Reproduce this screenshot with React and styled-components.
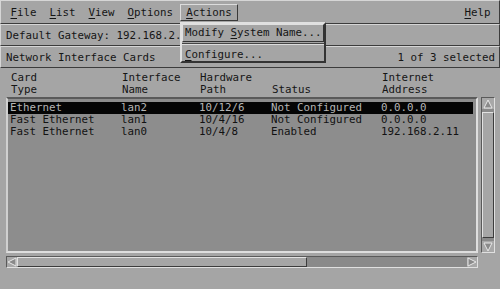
import styled, { createGlobalStyle } from "styled-components"

const GlobalStyle = createGlobalStyle`
  html, body {
    margin: 0;
    padding: 0;
    background: #a5a5a5;
  }
  body {
    font-family: "DejaVu Sans Mono", "Liberation Mono", monospace;
    font-size: 10.8px;
    color: #151515;
  }
`

const Window = styled.div`
    position: relative;
    width: 500px;
    height: 289px;
    overflow: hidden;
    background: #a5a5a5;
    display: flex;
    flex-direction: column;
    white-space: nowrap;
`

const MenuBar = styled.div`
    height: 24px;
    box-sizing: border-box;
    display: flex;
    align-items: center;
    padding: 0 2px 0 3px;
    border-top: 1px solid #d6d6d6;
    border-left: 1px solid #d6d6d6;
    border-right: 1px solid #3c3c3c;
    border-bottom: 1px solid #3c3c3c;
`

const MenuItem = styled.div`
    height: 17px;
    box-sizing: border-box;
    line-height: 15px;
    padding: 0 5.5px;
    border: 1px solid transparent;
    margin-left: ${p => (p.$right ? "auto" : "0")};
    ${p => p.$active && `
        border-top-color: #dcdcdc;
        border-left-color: #dcdcdc;
        border-right-color: #3a3a3a;
        border-bottom-color: #3a3a3a;
    `}
`

const Key = styled.span`
    text-decoration: underline;
    text-underline-offset: 2px;
`

const Strip = styled.div`
    height: 22px;
    box-sizing: border-box;
    display: flex;
    align-items: center;
    justify-content: space-between;
    padding: 0 4px 0 5px;
    border-top: 1px solid #d6d6d6;
    border-left: 1px solid #d6d6d6;
    border-right: 1px solid #3c3c3c;
    border-bottom: 1px solid #3c3c3c;
`

const Columns = styled.div`
    display: grid;
    grid-template-columns: 111px 78px 72px 110px 1fr;
    white-space: pre;
`

const Header = styled(Columns)`
    padding: 4px 0 0 11px;
    height: 29px;
    box-sizing: border-box;
    line-height: 11.5px;
`

const Body = styled.div`
    display: grid;
    grid-template-columns: 472px 14px;
    grid-template-rows: 156px 12px;
    column-gap: 3px;
    row-gap: 3px;
    padding-left: 6px;
`

const ListBox = styled.div`
    background: #8d8d8d;
    box-sizing: border-box;
    border: 2px solid;
    border-color: #5a5a5a #dedede #dedede #d0d0d0;
    padding-top: 3px;
`

const Row = styled(Columns)`
    height: 12px;
    line-height: 12px;
    padding-left: 2px;
    margin-right: 3px;
    background: ${p => (p.$selected ? "#050505" : "transparent")};
    color: ${p => (p.$selected ? "#b4b4b4" : "#121212")};
`

const VScroll = styled.div`
    box-sizing: border-box;
    border: 1px solid;
    border-color: #5a5a5a #e0e0e0 #e0e0e0 #5a5a5a;
    background: #8a8a8a;
    display: flex;
    flex-direction: column;
`

const HScroll = styled.div`
    box-sizing: border-box;
    border: 1px solid;
    border-color: #5a5a5a #e0e0e0 #e0e0e0 #5a5a5a;
    background: #8a8a8a;
    display: flex;
`

const Arrow = styled.div`
    flex: 0 0 auto;
    width: ${p => (p.$horizontal ? "10px" : "12px")};
    height: ${p => (p.$horizontal ? "10px" : "11px")};
    display: flex;
    align-items: center;
    justify-content: center;
    background: #a8a8a8;
`

const VThumb = styled.div`
    flex: 1;
    margin: 3px 0;
    box-sizing: border-box;
    border: 1px solid;
    border-color: #e2e2e2 #3c3c3c #3c3c3c #e2e2e2;
    background: #a6a6a6;
`

const HThumb = styled.div`
    flex: 0 0 290px;
    box-sizing: border-box;
    border: 1px solid;
    border-color: #e2e2e2 #3c3c3c #3c3c3c #e2e2e2;
    background: #a6a6a6;
`

const Trough = styled.div`
    flex: 1;
`

const Dropdown = styled.div`
    position: absolute;
    left: 180px;
    top: 22px;
    width: 146px;
    height: 41px;
    box-sizing: border-box;
    background: #a5a5a5;
    border: 2px solid;
    border-color: #e0e0e0 #333 #333 #e0e0e0;
    display: flex;
    flex-direction: column;
`

const DropItem = styled.div`
    height: ${p => (p.$active ? "18px" : "17px")};
    box-sizing: border-box;
    line-height: 16px;
    padding-left: 2px;
    border: 1px solid transparent;
    ${p => p.$active && `
        border-color: #e0e0e0 #333 #333 #e0e0e0;
    `}
`

const Separator = styled.div`
    height: 2px;
    margin: 1px 0;
    border-top: 1px solid #444;
    border-bottom: 1px solid #dcdcdc;
    box-sizing: border-box;
`

function ArrowIcon({ dir }) {
    const pts = {
        up: "1,9 5,1 9,9",
        down: "1,1 5,9 9,1",
        left: "9,1 1,5 9,9",
        right: "1,1 9,5 1,9",
    }[dir]
    return (
        <svg width="10" height="10" viewBox="0 0 10 10">
            <polygon points={pts} fill="#8a8a8a" stroke="#e8e8e8" strokeWidth="1" />
        </svg>
    )
}

const cards = [
    ["Ethernet", "lan2", "10/12/6", "Not Configured", "0.0.0.0"],
    ["Fast Ethernet", "lan1", "10/4/16", "Not Configured", "0.0.0.0"],
    ["Fast Ethernet", "lan0", "10/4/8", "Enabled", "192.168.2.11"],
]

function App() {
    return (
        <Window>
            <GlobalStyle />
            <MenuBar>
                <MenuItem><Key>F</Key>ile</MenuItem>
                <MenuItem><Key>L</Key>ist</MenuItem>
                <MenuItem><Key>V</Key>iew</MenuItem>
                <MenuItem><Key>O</Key>ptions</MenuItem>
                <MenuItem $active><Key>A</Key>ctions</MenuItem>
                <MenuItem $right><Key>H</Key>elp</MenuItem>
            </MenuBar>
            <Strip>
                <span>Default Gateway: 192.168.2.1</span>
            </Strip>
            <Strip>
                <span>Network Interface Cards</span>
                <span>1 of 3 selected</span>
            </Strip>
            <Header>
                <span>{"Card\nType"}</span>
                <span>{"Interface\nName"}</span>
                <span>{"Hardware\nPath"}</span>
                <span>{"\nStatus"}</span>
                <span>{"Internet\nAddress"}</span>
            </Header>
            <Body>
                <ListBox>
                    {cards.map((c, i) => (
                        <Row key={c[1]} $selected={i === 0}>
                            {c.map((v, j) => <span key={j}>{v}</span>)}
                        </Row>
                    ))}
                </ListBox>
                <VScroll>
                    <Arrow><ArrowIcon dir="up" /></Arrow>
                    <VThumb />
                    <Arrow><ArrowIcon dir="down" /></Arrow>
                </VScroll>
                <HScroll>
                    <Arrow $horizontal><ArrowIcon dir="left" /></Arrow>
                    <HThumb />
                    <Trough />
                    <Arrow $horizontal><ArrowIcon dir="right" /></Arrow>
                </HScroll>
            </Body>
            <Dropdown>
                <DropItem $active>Modify <Key>S</Key>ystem Name...</DropItem>
                <Separator />
                <DropItem><Key>C</Key>onfigure...</DropItem>
            </Dropdown>
        </Window>
    )
}

export default App
